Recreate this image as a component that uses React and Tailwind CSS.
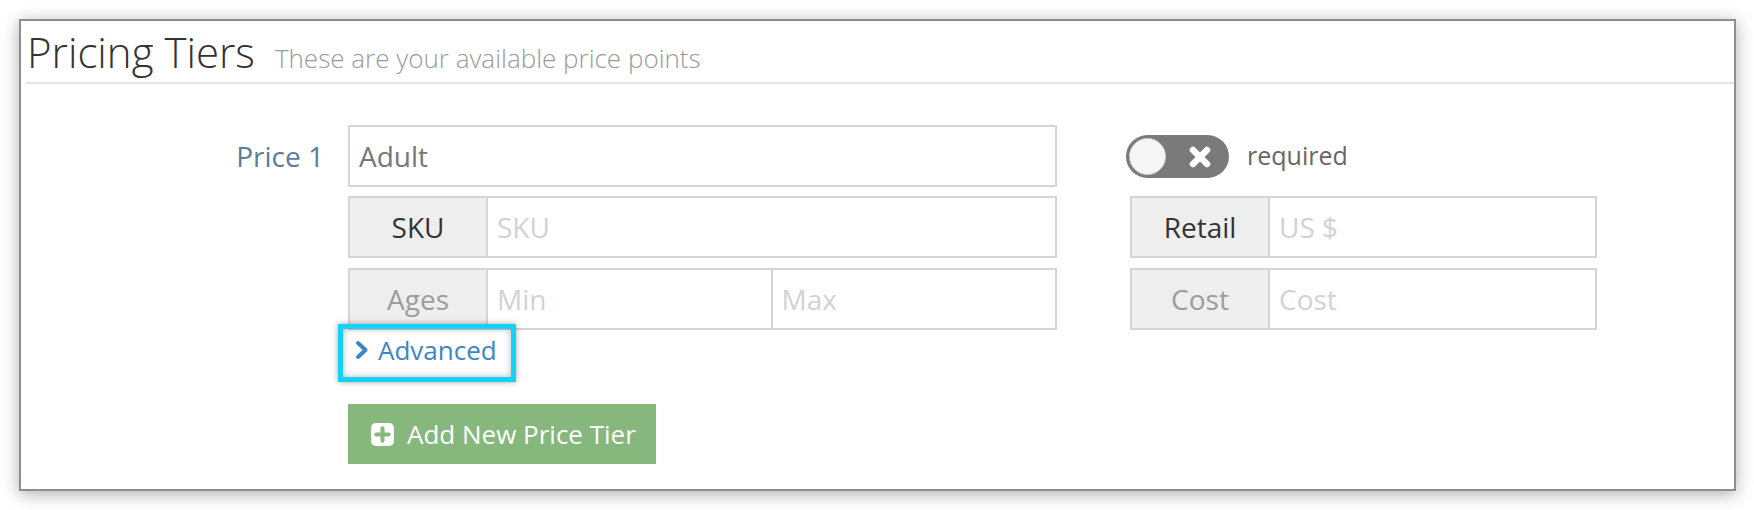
import React from 'react';

const font = { fontFamily: '"Open Sans", "Noto Sans", Arial, sans-serif' };

const AddonGroup = ({ label, muted, fields }) => (
    <div className="flex h-[62px] border-2 border-[#d5d5d5] bg-white">
        <div className={`w-[138px] shrink-0 flex items-center justify-center bg-[#eeeeee] border-r-2 border-[#d5d5d5] text-[28px] ${muted ? 'text-[#9c9c9c]' : 'text-[#333333]'}`}>
            {label}
        </div>
        {fields.map((f, i) => (
            <input
                key={f}
                readOnly
                placeholder={f}
                className={`flex-1 min-w-0 h-full px-[9px] text-[28px] bg-white outline-none placeholder:text-[#d2d2d2] ${i > 0 ? 'border-l-2 border-[#d5d5d5]' : ''}`}
            />
        ))}
    </div>
);

const PlusSquare = () => (
    <svg width="23" height="23" viewBox="0 0 24 24">
        <rect x="0" y="0" width="24" height="24" rx="5" fill="#ffffff" />
        <path d="M12 5.5v13M5.5 12h13" stroke="#86b77d" strokeWidth="4.2" strokeLinecap="round" />
    </svg>
);

const Toggle = () => (
    <div className="relative w-[103px] h-[43px] rounded-full bg-[#7a7a7a] flex items-center pl-[3px]">
        <div className="w-[37px] h-[37px] rounded-full bg-[#f6f6f6] border border-[#cfcfcf]" />
        <svg className="absolute left-[62px] top-[10px]" width="24" height="24" viewBox="0 0 24 24">
            <path d="M5 5l14 14M19 5L5 19" stroke="#ffffff" strokeWidth="6.5" strokeLinecap="round" />
        </svg>
    </div>
);

export default function App() {
    return (
        <div className="w-[1754px] h-[510px] bg-white pl-[19px] pt-[19px]" style={font}>
            <div className="w-[1717px] h-[472px] bg-white border-2 border-[#8e8e8e] shadow-[0_3px_16px_rgba(0,0,0,0.32)]">

                {/* header */}
                <div className="ml-[5px] pt-[7px] pb-[4px] border-b-2 border-[#e5e5e5] flex items-baseline">
                    <h1 className="pl-[1px] text-[42px] leading-[48px] font-light text-[#333333]">Pricing Tiers</h1>
                    <span className="ml-[20px] text-[26px] font-light text-[#9a9a9a]">These are your available price points</span>
                </div>

                {/* form */}
                <div className="flex pt-[41px]">
                    <div className="w-[303px] h-[62px] flex items-center justify-end text-[28px] text-[#5c7d9b]">
                        Price 1
                    </div>

                    <div className="ml-[24px] w-[709px]">
                        <input
                            readOnly
                            defaultValue="Adult"
                            className="w-full h-[62px] border-2 border-[#d5d5d5] px-[9px] text-[28px] text-[#777777] outline-none"
                        />
                        <div className="mt-[9px]">
                            <AddonGroup label="SKU" fields={['SKU']} />
                        </div>
                        <div className="mt-[10px]">
                            <AddonGroup label="Ages" muted fields={['Min', 'Max']} />
                        </div>

                        <div className="relative mt-[5px] pl-[7px] h-[30px] w-fit flex items-center gap-[9px] text-[26px] leading-[30px] text-[#3b86c6]">
                            <svg width="14" height="20" viewBox="0 0 14 20">
                                <path d="M3 3l7.5 7-7.5 7" fill="none" stroke="#3b86c6" strokeWidth="4" strokeLinecap="round" strokeLinejoin="round" />
                            </svg>
                            <span>Advanced</span>
                            <div className="absolute left-[-10px] top-[-11px] w-[178px] h-[58px] border-[5px] border-[#14d2f6] shadow-[0_0_6px_rgba(0,0,0,0.35),inset_0_0_6px_rgba(0,0,0,0.3)]" />
                        </div>

                        <button className="mt-[39px] w-[308px] h-[60px] bg-[#86b77d] flex items-center pl-[23px] gap-[13px] text-white text-[26px]">
                            <PlusSquare />
                            <span>Add New Price Tier</span>
                        </button>
                    </div>

                    <div className="ml-[73px] w-[467px]">
                        <div className="h-[62px] flex items-center -ml-[4px]">
                            <Toggle />
                            <span className="ml-[18px] text-[25px] text-[#666666]">required</span>
                        </div>
                        <div className="mt-[9px]">
                            <AddonGroup label="Retail" fields={['US $']} />
                        </div>
                        <div className="mt-[10px]">
                            <AddonGroup label="Cost" muted fields={['Cost']} />
                        </div>
                    </div>
                </div>
            </div>
        </div>
    );
}
